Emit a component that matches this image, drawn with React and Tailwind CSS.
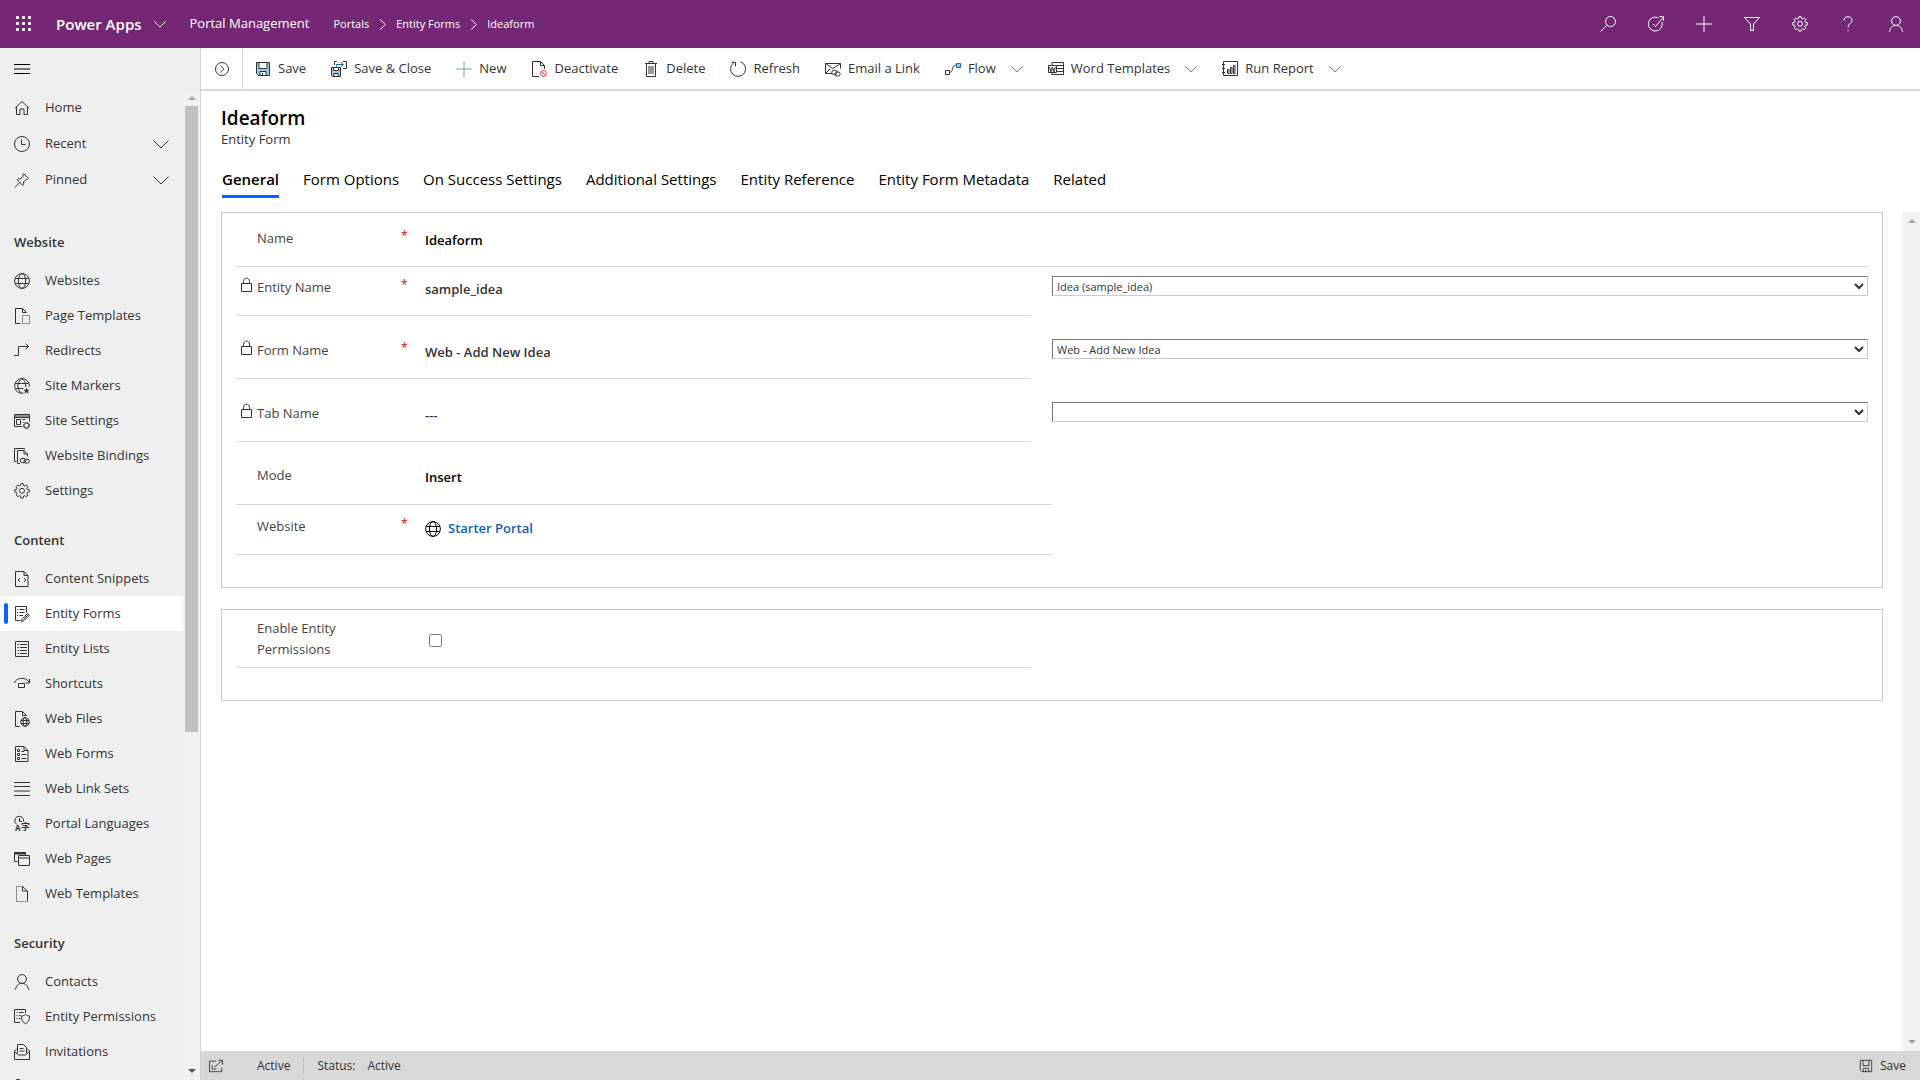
import React from 'react'
import { useState } from 'react'

function Svg({ children, size = 16, className = "" }) {
  return (
    <svg
      width={size}
      height={size}
      viewBox="0 0 16 16"
      fill="none"
      stroke="currentColor"
      strokeWidth="1"
      aria-hidden="true"
      className={"shrink-0 overflow-visible " + className}
    >
      {children}
    </svg>
  )
}

const gearPath = "M6.9 .6h2.2l.4 1.9 1.1.5 1.7-1.1 1.6 1.6-1.1 1.7.5 1.1 2 .4v2.2l-2 .4-.5 1.1 1.1 1.7-1.6 1.6-1.7-1.1-1.1.5-.4 2H6.9l-.4-2-1.1-.5-1.7 1.1-1.6-1.6 1.1-1.7-.5-1.1-2-.4V6.7l2-.4.5-1.1-1.1-1.7 1.6-1.6 1.7 1.1 1.1-.5z"

const globe = (
  <>
    <circle cx="8" cy="8" r="7.4" />
    <ellipse cx="8" cy="8" rx="3.6" ry="7.4" />
    <path d="M1.3 5.5h13.4M1.3 10.5h13.4" />
  </>
)

const person = (
  <>
    <circle cx="8" cy="5" r="4.4" />
    <path d="M1.5 15.8c.3-3.8 2.8-6.4 6.5-6.4s6.2 2.6 6.5 6.4" />
  </>
)

const icons = {
  home: <path d="M1 8.2 8 1.5l7 6.7M2.5 7v7.5h3.5v-5.5h4v5.5h3.5V7" />,
  clock: (
    <>
      <circle cx="8" cy="8" r="7.5" />
      <path d="M7.5 3.5v5h4" />
    </>
  ),
  pin: <path d="M9.5 1.5l5 5-1 1-1.2-.3-2.8 2.8c.4 1.5.1 2.6-.7 3.5L3 7.7c1-.9 2.2-1.2 3.5-.7l2.7-2.8-.4-1.5zM5.8 10.5l-5 5" />,
  globe,
  pageTemplate: (
    <>
      <path d="M6.5 15.5h-5V.5h7l4 4M8.5 .5v4h4" />
      <path d="M8.5 7.5h7v8h-7z" strokeDasharray="1 1" />
    </>
  ),
  redirect: <path d="M0 12.500h4.500v-9h10.500M11.500 .5l3 3-3 3" />,
  siteMarker: (
    <>
      <path d="M9.5 15.2A7.4 7.4 0 1 1 15.4 8.5M8 15.4C2.5 12 2.5 4 8 .6c3.500 2.600 4 6 3.700 8.400M1.300 5.500h13.400M1.300 10.500h8" />
      <path d="M12.5 9.5l.9 2.3h2.3l-1.8 1.5.7 2.4-2.1-1.4-2.1 1.4.7-2.4-1.8-1.5h2.3z" fill="currentColor" stroke="none" />
    </>
  ),
  siteSetting: (
    <>
      <path d="M8.5 13.5h-8v-12h15v7M.5 4.5h15M2.5 6.5h4v5h-4zM8.5 6.5h3M8.5 9.5h1" />
      <path d="M.5 3h15" />
      <circle cx="12.5" cy="12.5" r="2.5" />
      <circle cx="12.5" cy="12.5" r="3.2" strokeDasharray="1.2 1.31" />
    </>
  ),
  binding: (
    <>
      <path d="M2.5 13.5h-2V.5h10v1M6 15.5H3.5V2.5h6.5l3.5 3.5v2.5M10 2.5V6h3.5" />
      <ellipse cx="9" cy="12.5" rx="2.8" ry="2.3" />
      <ellipse cx="12.7" cy="13.2" rx="2.7" ry="2.1" />
    </>
  ),
  gear: (
    <>
      <path d={gearPath} />
      <circle cx="8" cy="7.8" r="2.5" />
    </>
  ),
  snippet: <path d="M1.5 .5h8.5l4 4v11h-12.5zM10 .5v4h4M6 7l-2 2 2 2M10 7l2 2-2 2" />,
  entityForm: (
    <>
      <path d="M6.5 14.5h-5V.5h11v6M3 3.5h1M5.5 3.5h5M3 6.5h1M5.5 6.5h5M3 9.5h1M5.5 9.5h3.5" />
      <path d="M7.5 15.5l.6-2.7 5.6-5.4 1.7 1.8-5.5 5.5zM9.5 13.5l4.5-4.5" />
    </>
  ),
  entityList: (
    <>
      <path d="M1.5 .5h13v15h-13z" />
      <path d="M3.5 3.5h1.5M6 3.5h7M3.5 6.5h1.5M6 6.5h7M3.5 9.5h1.5M6 9.5h7M3.5 12.5h1.5M6 12.5h7" />
    </>
  ),
  shortcut: <path d="M.3 7c1-3 4-4.7 7.4-4.7 3.5 0 6 1.4 7.5 4M15.5 3v4h-4M4.5 7.5h6v4h-6z" />,
  webFile: (
    <>
      <path d="M5.5 15.5H1.5V.5h7l4 4M8.5 .5v4h4" />
      <circle cx="11" cy="11" r="4.3" />
      <ellipse cx="11" cy="11" rx="1.9" ry="4.3" />
      <path d="M7 9.5h8M7 12.5h8" />
    </>
  ),
  webForm: (
    <>
      <path d="M1.5 .5h8.5l4 4v11h-12.5zM10 .5v4h4" />
      <path d="M3.5 3.5h2v2h-2zM3.5 7.5h2v2h-2zM3.5 11.5h2v2h-2zM7.5 5.5h2.5M7.5 8.5h5M7.5 12.5h5" />
    </>
  ),
  linkSet: <path d="M0 1.5h16M0 5.5h16M0 10h16M0 14.5h16" />,
  language: (
    <>
      <path d="M2.8 8.5A4.4 4.4 0 1 1 9.5 5.5M5.5 2v3.5h2.5" />
      <text x="1" y="15" fontSize="8" fontFamily="Open Sans" fontWeight="700" fill="currentColor" stroke="none">A</text>
      <text x="7" y="14" fontSize="9" fontFamily="Noto Sans CJK SC" fontWeight="700" fill="currentColor" stroke="none">字</text>
    </>
  ),
  webPage: (
    <>
      <path d="M3.5 10.5h-3V1.5h11v3M4.5 4.5h11v10h-11zM4.5 7h11" />
      <path d="M.5 2.5h11" strokeWidth="2" />
    </>
  ),
  webTemplate: (
    <>
      <path d="M8.5 .5h-6v15h11v-10" strokeDasharray="1 1" />
      <path d="M8.5 .5v4.5h5zM13.5 5v10" />
    </>
  ),
  person,
  permission: (
    <>
      <path d="M6 13.5H.5V.5h11v3.5M2.5 3.5h1M5 3.5h4.5M2.5 6.5h1M5 6.5h1.5M2.5 9.5h1M5 9.5h1.5" />
      <path d="M11.5 5.5c1.2 1 2.5 1.4 4 1.4 0 3.8-.8 6.3-4 7.9-3.2-1.6-4-4.1-4-7.9 1.5 0 2.8-.4 4-1.4z" />
    </>
  ),
  invitation: (
    <>
      <path d="M3 4.5L.5 7v8.5h15V7L13 4.5M.5 7.5l4 3.5h7l4-3.5" />
      <path d="M3.5 9.5v-9h6l3 3v6M5.5 4.5h4M5.5 7h5" />
    </>
  ),
  webRole: <path d="M2.5 6V.5h3V6M1 6.5h14v9H1z" />,
}

const navGroups = [
  {
    title: "Website",
    items: [
      ["Websites", "globe"],
      ["Page Templates", "pageTemplate"],
      ["Redirects", "redirect"],
      ["Site Markers", "siteMarker"],
      ["Site Settings", "siteSetting"],
      ["Website Bindings", "binding"],
      ["Settings", "gear"],
    ],
  },
  {
    title: "Content",
    items: [
      ["Content Snippets", "snippet"],
      ["Entity Forms", "entityForm"],
      ["Entity Lists", "entityList"],
      ["Shortcuts", "shortcut"],
      ["Web Files", "webFile"],
      ["Web Forms", "webForm"],
      ["Web Link Sets", "linkSet"],
      ["Portal Languages", "language"],
      ["Web Pages", "webPage"],
      ["Web Templates", "webTemplate"],
    ],
  },
  {
    title: "Security",
    items: [
      ["Contacts", "person"],
      ["Entity Permissions", "permission"],
      ["Invitations", "invitation"],
    ],
  },
]

const floppy = (
  <>
    <path d="M1.5 1.5h13v13h-11l-2-2z" fill="#9fc9ec" />
    <path d="M4 1.5h8v6H4z" fill="#fff" />
    <path d="M5 10.5h6v4H5z" fill="#fff" />
    <path d="M7.5 12v2.5" />
  </>
)

const commands = [
  { label: "Save", icon: floppy },
  {
    label: "Save & Close",
    icon: (
      <>
        <path d="M.5 6.5h9v9h-8l-1-1z" fill="#9fc9ec" />
        <path d="M2.5 6.5h5v3h-5zM3 12.5h4v3H3z" fill="#fff" />
        <path d="M3.5 4V.5h2M12 .5h3.5v7H12" />
        <path d="M5.5 5.5V3.5H12M10 1.2l2.3 2.3L10 5.8" stroke="#1664b0" />
      </>
    ),
  },
  { label: "New", icon: <path d="M8 0v16M0 8h16" stroke="#5dba7d" /> },
  {
    label: "Deactivate",
    icon: (
      <>
        <path d="M8 15.5H1.5V.5h8l4 4V8M9.5 .5v4h4" />
        <g stroke="#e0474c">
          <circle cx="12.5" cy="12.5" r="3" />
          <path d="M10.5 10.5l4 4" />
        </g>
      </>
    ),
  },
  { label: "Delete", icon: <path d="M2 2.5h12M6 2.5v-2h4v2M3.500 2.500v13h9v-13M6 5v8M8 5v8M10 5v8" /> },
  { label: "Refresh", icon: <path d="M10.5 .8A7.5 7.5 0 1 1 4 1.6M1.5 1.3h4v4" /> },
  {
    label: "Email a Link",
    icon: (
      <>
        <path d="M7 12.5H.5v-10h15v5M.5 2.5l7.5 5 7.5-5M.5 12.5L5 8" />
        <ellipse cx="9.5" cy="11.5" rx="2.7" ry="2.2" />
        <ellipse cx="12.5" cy="13" rx="2.7" ry="2.2" />
      </>
    ),
  },
  {
    label: "Flow",
    menu: true,
    icon: (
      <>
        <path d="M.5 9.5h4v4h-4zM4.5 11.5c4 0 2-7.5 6.5-7.5" />
        <path d="M11.5 2.5h4v4h-4z" fill="#9fc9ec" stroke="#1664b0" />
      </>
    ),
  },
  {
    label: "Word Templates",
    menu: true,
    icon: (
      <>
        <path d="M4 4V1.5h11.5v12H4V12M8.5 4.5h7M8.5 7.5h7M8.5 10.5h7" />
        <path d="M.5 4.500h8v7H.5z" fill="#fff" />
        <text x="1" y="10.500" fontSize="7" fontFamily="Open Sans" fontWeight="700" fill="currentColor" stroke="none">W</text>
      </>
    ),
  },
  {
    label: "Run Report",
    menu: true,
    icon: <path d="M1.5 .5h14v14h-14zM0 3.5h3M0 7.5h3M0 11.5h3M5.5 8.5h1.500v4H5.500zM8.500 6.500h1.500v6H8.500zM11.500 4.500H13v8h-1.500z" />,
  },
]

const headerIcons = [
  ["Search", <><circle cx="10.5" cy="5.5" r="5" /><path d="M7 9l-6.5 6.5" /></>],
  ["Assistant", <><path d="M10.5 1.8A7 7 0 1 0 14 6M5 8l2.5 2.5 7.5-9M11.5 .7h4v4" /></>],
  ["Create", <path d="M8 0v16M0 8h16" />],
  ["Filter", <path d="M.5 1.5h15L9.5 8v6.5h-3V8z" />],
  ["Settings", icons.gear],
  ["Help", <><path d="M4 4.5C4 2 5.7 .7 8 .7s4 1.4 4 3.6c0 3-4 3.4-4 7.2" /><path d="M8 14v1.3" /></>],
  ["Account", person],
]

const tabs = [
  "General",
  "Form Options",
  "On Success Settings",
  "Additional Settings",
  "Entity Reference",
  "Entity Form Metadata",
  "Related",
]

function Chevron({ size = 12, className = "" }) {
  return (
    <Svg size={size} className={className}>
      <path d="M.5 4.5l7.5 7.5 7.5-7.5" vectorEffect="non-scaling-stroke" />
    </Svg>
  )
}

function Header() {
  return (
    <header className="flex h-12 shrink-0 items-center bg-[#742774] text-white">
      <button type="button" aria-label="App launcher" className="flex w-12 justify-center">
        <svg width="16" height="16" viewBox="0 0 16 16" fill="currentColor" aria-hidden="true">
          {[0, 6, 12].map((y) => [0, 6, 12].map((x) => (
            <rect key={x + "-" + y} x={x} y={y} width="3" height="3" rx="1" />
          )))}
        </svg>
      </button>
      <button type="button" className="flex items-center gap-3 pl-2 text-[15px] font-semibold">
        Power Apps
        <Chevron />
      </button>
      <a href="#" className="pl-6 text-[13px]">Portal Management</a>
      <nav aria-label="Breadcrumb" className="flex items-center gap-2 pl-6 text-[11px]">
        <a href="#">Portals</a>
        <Chevron size={11} className="-rotate-90" />
        <a href="#">Entity Forms</a>
        <Chevron size={11} className="-rotate-90" />
        <a href="#">Ideaform</a>
      </nav>
      <div className="ml-auto flex">
        {headerIcons.map(([label, icon]) => (
          <button key={label} type="button" aria-label={label} className="flex h-12 w-12 items-center justify-center">
            <Svg>{icon}</Svg>
          </button>
        ))}
      </div>
    </header>
  )
}

function NavItem({ label, icon, selected, onClick }) {
  return (
    <a
      href="#"
      onClick={onClick}
      aria-current={selected ? "page" : undefined}
      className={"relative flex h-[35px] items-center gap-[15px] pl-3.5 " + (selected ? "bg-white" : "")}
    >
      {selected && <span className="absolute left-1 h-[21px] w-1 rounded-sm bg-[#0066ff]"></span>}
      <Svg>{icons[icon]}</Svg>
      {label}
    </a>
  )
}

function Triangle({ up, className = "" }) {
  return (
    <svg width="8" height="4" viewBox="0 0 8 4" fill="currentColor" aria-hidden="true" className={"shrink-0 " + className}>
      <path d={up ? "M0 4l4-4 4 4z" : "M0 0l4 4 4-4z"} />
    </svg>
  )
}

function Sidebar() {
  const [current, setCurrent] = useState("Entity Forms")

  return (
    <aside className="flex w-[201px] shrink-0 flex-col border-r border-[#d2d2d2] bg-[#efefef] text-[13px] text-[#333]">
      <button type="button" aria-label="Site map" className="flex h-[42px] shrink-0 items-center pl-3.5 text-black">
        <Svg><path d="M0 3.5h16M0 8h16M0 12.5h16" /></Svg>
      </button>
      <div className="flex min-h-0 flex-1">
        <nav aria-label="Site map" className="flex-1 overflow-hidden">
          <a href="#" className="flex h-9 items-center gap-[15px] pl-3.5">
            <Svg>{icons.home}</Svg>
            Home
          </a>
          <button type="button" className="flex h-9 w-full items-center gap-[15px] pr-3.5 pl-3.5">
            <Svg>{icons.clock}</Svg>
            Recent
            <Chevron size={16} className="ml-auto" />
          </button>
          <button type="button" className="mb-3 flex h-9 w-full items-center gap-[15px] pr-3.5 pl-3.5">
            <Svg>{icons.pin}</Svg>
            Pinned
            <Chevron size={16} className="ml-auto" />
          </button>
          {navGroups.map((group) => (
            <div key={group.title}>
              <h2 className="flex h-[53px] items-end pb-[11px] pl-3.5 text-[13px] leading-5 font-semibold">{group.title}</h2>
              {group.items.map(([label, icon]) => (
                <NavItem
                  key={label}
                  label={label}
                  icon={icon}
                  selected={current === label}
                  onClick={() => setCurrent(label)}
                />
              ))}
            </div>
          ))}
          <a href="#" aria-label="Web Roles" className="flex h-[35px] items-center pl-3.5">
            <Svg>{icons.webRole}</Svg>
          </a>
        </nav>
        <div className="flex w-[17px] flex-col items-center bg-[#f1f1f1]">
          <Triangle up className="my-1.5 text-[#a3a3a3]" />
          <div className="flex w-[13px] flex-1 flex-col">
            <div className="flex-[19] bg-[#c1c1c1]"></div>
            <div className="flex-[10]"></div>
          </div>
          <Triangle className="my-[7px] text-[#505050]" />
        </div>
      </div>
    </aside>
  )
}

function CommandBar() {
  return (
    <div className="flex h-[43px] shrink-0 border-b-2 border-[#d8d8d8] text-[13px] text-[#333]">
      <button type="button" aria-label="Open record set" className="flex w-[42px] items-center justify-center border-r border-[#d8d8d8]">
        <Svg>
          <circle cx="8" cy="8" r="6.5" />
          <path d="M6.5 4.5L10 8l-3.5 3.5" stroke="#1664b0" />
        </Svg>
      </button>
      <div className="flex items-center gap-[25px] pl-3">
        {commands.map(({ label, icon, menu }) => (
          <button key={label} type="button" className="flex items-center gap-[7px]">
            <Svg>{icon}</Svg>
            {label}
            {menu && <Chevron className="ml-2 text-[#777]" />}
          </button>
        ))}
      </div>
    </div>
  )
}

function Field({ id, label, locked, required, className = "", children }) {
  return (
    <div className={"flex items-start border-b border-[#d8d8d8] " + className}>
      <span className="flex w-[21px] shrink-0 pl-1">
        {locked && (
          <svg width="13" height="16" viewBox="0 0 13 16" fill="none" stroke="#333" aria-hidden="true">
            <path d="M1.5 6.5h10v8h-10zM3.5 6.5v-2c0-4.500 6-4.500 6 0v2" />
          </svg>
        )}
      </span>
      <label htmlFor={id} className="w-[120px] shrink-0 leading-[21px] text-[#444]">{label}</label>
      <span className="w-[48px] shrink-0 pl-6 text-xs text-[#e00000]">{required && "*"}</span>
      <div className="mt-0.5 flex-1 leading-[21px] font-semibold text-black">{children}</div>
    </div>
  )
}

function Picker({ label, options, className = "" }) {
  return (
    <div className={className}>
      <select
        aria-label={label}
        className="block h-5 w-full border border-t-[#767676] border-r-[#ccc] border-b-[#ccc] border-l-[#767676] bg-white text-[11px] text-[#333]"
      >
        {options.map((option) => (
          <option key={option}>{option}</option>
        ))}
      </select>
    </div>
  )
}

function GeneralForm() {
  return (
    <form className="flex flex-1 flex-col gap-[21px] pl-5 text-[13px]">
      <section className="border border-[#ccc] px-3.5 pb-8">
        <Field id="name" label="Name" required className="h-[54px] pt-[15px]">
          <input id="name" defaultValue="Ideaform" className="w-full outline-none" />
        </Field>
        <div className="grid grid-cols-2">
          <Field id="entityName" label="Entity Name" locked required className="mr-[21px] h-[49px] pt-2.5">
            <input id="entityName" defaultValue="sample_idea" readOnly className="w-full text-[#333] outline-none" />
          </Field>
          <Picker label="Entity Name" options={["Idea (sample_idea)"]} className="pt-[9px]" />
          <Field id="formName" label="Form Name" locked required className="mr-[21px] h-[63px] pt-6">
            <input id="formName" defaultValue="Web - Add New Idea" readOnly className="w-full text-[#333] outline-none" />
          </Field>
          <Picker label="Form Name" options={["Web - Add New Idea"]} className="pt-[23px]" />
          <Field id="tabName" label="Tab Name" locked className="mr-[21px] h-[63px] pt-6">
            <input id="tabName" defaultValue="---" readOnly className="w-full text-[#333] outline-none" />
          </Field>
          <Picker label="Tab Name" options={[""]} className="pt-[23px]" />
          <Field id="mode" label="Mode" className="col-start-1 h-[63px] pt-[23px]">
            <select id="mode" className="w-full appearance-none outline-none">
              <option>Insert</option>
            </select>
          </Field>
          <Field id="website" label="Website" required className="col-start-1 h-[50px] pt-[11px]">
            <a id="website" href="#" className="flex items-center gap-[7px] text-[#1160b7]">
              <Svg className="text-black">{globe}</Svg>
              Starter Portal
            </a>
          </Field>
        </div>
      </section>

      <section className="grid grid-cols-2 border border-[#ccc] px-3.5 pb-8">
        <Field id="permissions" label={<>Enable Entity<br />Permissions</>} className="mr-[21px] h-[58px] pt-2">
          <input
            id="permissions"
            type="checkbox"
            className="mt-3.5 ml-1 block h-[13px] w-[13px]"
          />
        </Field>
      </section>
    </form>
  )
}

function App() {
  const [tab, setTab] = useState("General")

  return (
    <div className="flex h-screen flex-col overflow-hidden bg-white font-['Open_Sans','Noto_Sans',sans-serif]">
      <Header />
      <div className="flex min-h-0 flex-1">
        <Sidebar />
        <main className="flex min-w-0 flex-1 flex-col">
          <CommandBar />
          <div className="px-5 pt-[15px]">
            <h1 className="text-[19px] leading-6 font-semibold text-black">Ideaform</h1>
            <p className="text-[13px] leading-[18px] font-medium text-[#333]">Entity Form</p>
          </div>
          <div role="tablist" className="mb-3.5 flex gap-6 px-[21px] pt-[19px]">
            {tabs.map((name) => (
              <button
                key={name}
                type="button"
                role="tab"
                aria-selected={tab === name}
                onClick={() => setTab(name)}
                className={"border-b-3 pb-1 text-[15px] leading-6 text-black " + (tab === name ? "border-[#0066ff] font-semibold" : "border-transparent")}
              >
                {name}
              </button>
            ))}
          </div>
          <div className="flex min-h-0 flex-1 gap-5">
            <GeneralForm />
            <div className="flex w-[17px] flex-col items-center justify-between bg-[#f1f1f1] py-[7px] text-[#a3a3a3]">
              <Triangle up />
              <Triangle />
            </div>
          </div>
          <footer className="flex h-[29px] shrink-0 items-center bg-[#d8d8d8] pt-px pr-3.5 pl-2 text-xs text-[#333]">
            <button type="button" aria-label="Pop out">
              <Svg size={14}>
                <path d="M8 2.5H.5v12h14V10M6 9.500l8.500-7M10.500 1.500h5v5M3.500 7v4.500h5" />
              </Svg>
            </button>
            <span className="pl-[34px]">Active</span>
            <span className="mx-[13px] h-4 w-px bg-[#bbb]"></span>
            <span>Status:</span>
            <span className="pl-3">Active</span>
            <button type="button" className="ml-auto flex items-center gap-[7px]">
              <Svg size={14}><path d="M1.5 1.5h13v13h-11l-2-2zM4.5 1.5v6h7v-6M5 14.5v-4h6v4M7.5 12v2.5" /></Svg>
              Save
            </button>
          </footer>
        </main>
      </div>
    </div>
  )
}

export default App
